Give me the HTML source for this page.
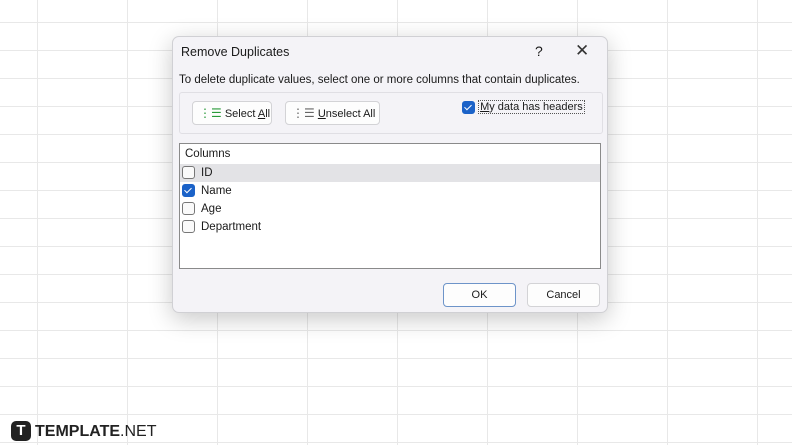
<!DOCTYPE html>
<html><head><style>
body{margin:0;width:792px;height:445px;overflow:hidden;background:#fff;font-family:"Liberation Sans",sans-serif;position:relative;
background-image:linear-gradient(to right,#e8e8e8 1px,transparent 1px),linear-gradient(to bottom,#e8e8e8 1px,transparent 1px);
background-size:90px 28px;background-position:37px 22px;}
.dlg{position:absolute;left:172px;top:36px;width:434px;height:275px;background:#f4f3f7;border:1px solid #d0d0d4;border-radius:7px;box-shadow:0 6px 24px rgba(0,0,0,.22);font-size:11.5px;color:#1a1a1a}
.t{position:absolute;top:8px;left:8px;font-size:12.5px}
.q{position:absolute;top:6px;left:362px;font-size:14px}
.x{position:absolute;top:4px;left:402px;font-size:17px;font-weight:300;color:#333}
.d{position:absolute;top:37px;left:6px;font-size:11.5px}
.grp{position:absolute;left:6px;top:55px;width:422px;height:40px;border:1px solid #e0dfe4;border-radius:3px}
.btn{position:absolute;background:#fdfdfd;border:1px solid #d3d3d6;border-radius:4px;height:22px;line-height:22px;font-size:11px}
.cb{display:inline-block;width:11px;height:11px;border:1px solid #777;border-radius:3px;background:#fafafa;vertical-align:middle}
.cbk{background:#1b62c8;border-color:#1b62c8;position:relative}
.cbk:after{content:"";position:absolute;left:3px;top:1px;width:3px;height:6px;border:solid #fff;border-width:0 1.5px 1.5px 0;transform:rotate(45deg)}
.list{position:absolute;left:6px;top:106px;width:420px;height:124px;background:#fff;border:1px solid #8a8a8a}
.row{height:18px;line-height:18px;padding-left:2px;font-size:11.5px}
.row .cb{margin-right:6px}
</style></head><body>
<div class="dlg">
<div class="t">Remove Duplicates</div>
<div class="q">?</div>
<div class="x">✕</div>
<div class="d">To delete duplicate values, select one or more columns that contain duplicates.</div>
<div class="grp">
 <div class="btn" style="left:12px;top:8px;width:78px"><span style="color:#2a9a3a;margin-left:6px;font-size:12px">⋮☰</span> Select <u>A</u>ll</div>
 <div class="btn" style="left:105px;top:8px;width:93px"><span style="color:#666;margin-left:6px;font-size:12px">⋮☰</span> <u>U</u>nselect All</div>
 <div style="position:absolute;left:282px;top:8px;font-size:11px"><span class="cb cbk"></span> <span style="border:1px dotted #555;padding:0 1px"><u>M</u>y data has headers</span></div>
</div>
<div class="list">
 <div class="row" style="padding-left:5px;height:20px;line-height:20px">Columns</div>
 <div class="row" style="background:#e3e3e6"><span class="cb"></span>ID</div>
 <div class="row"><span class="cb cbk"></span>Name</div>
 <div class="row"><span class="cb"></span>Age</div>
 <div class="row"><span class="cb"></span>Department</div>
</div>
<div class="btn" style="left:270px;top:246px;width:71px;text-align:center;border:1.5px solid #6d94c9">OK</div>
<div class="btn" style="left:354px;top:246px;width:71px;text-align:center">Cancel</div>
</div>
<div style="position:absolute;left:11px;top:421px;width:20px;height:20px;background:#222;border-radius:5px;color:#fff;font-weight:bold;font-size:15px;line-height:20px;text-align:center">T</div>
<div style="position:absolute;left:35px;top:422px;font-size:16px;color:#222;line-height:19px"><b>TEMPLATE</b>.NET</div>
</body></html>
